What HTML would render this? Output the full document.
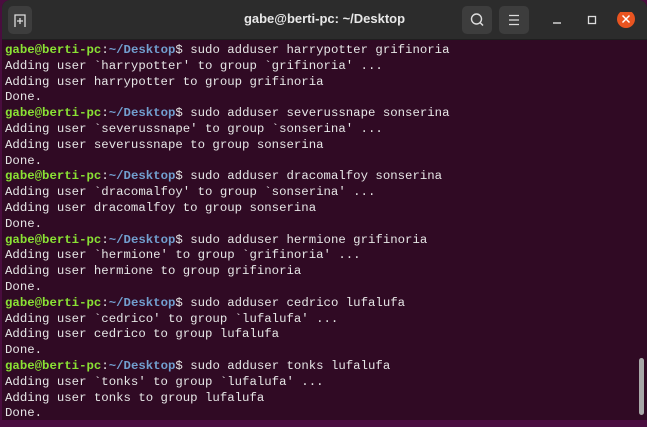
<!DOCTYPE html>
<html><head><style>
body{margin:0;width:647px;height:427px;background:#4a0d3f;overflow:hidden;font-family:"Liberation Sans",sans-serif}
.win{position:absolute;left:2px;top:0;width:645px;height:420px;background:#300a24;border-radius:8px 8px 0 0;overflow:hidden}
.hdr{position:absolute;left:0;top:0;width:645px;height:39px;background:#2c2c2c;border-bottom:1px solid #1f1f1f}
.btn{position:absolute;top:6px;height:28px;background:#3d3d3d;border-radius:5px}
.title{position:absolute;left:0;width:645px;top:11px;text-align:center;color:#e8e8e8;font-size:13px;font-weight:bold}
pre{position:absolute;left:3px;top:43px;margin:0;font-family:"Liberation Mono",monospace;font-size:12.35px;line-height:15.8px;color:#e6e6e6}
.g{color:#8ae234;font-weight:bold}.b{color:#729fcf;font-weight:bold}
.sb{position:absolute;left:637px;top:358px;width:5px;height:57px;background:#a8a8a8;border-radius:3px}
</style></head><body>
<div class="win">
<div class="hdr">
<div class="btn" style="left:6px;width:24px"><svg width="24" height="28"><path d="M7 21V9h10v12M12 12v6M9 15h6" stroke="#ddd" stroke-width="1.3" fill="none"/></svg></div>
<div class="title">gabe@berti-pc: ~/Desktop</div>
<div class="btn" style="left:460px;width:30px"><svg width="30" height="28"><circle cx="14.5" cy="13" r="5" stroke="#ddd" stroke-width="1.4" fill="none"/><path d="M18 16.5l3 3" stroke="#ddd" stroke-width="1.5"/></svg></div>
<div class="btn" style="left:497px;width:30px"><svg width="30" height="28"><path d="M10 9.5h10M10 14h10M10 18.5h10" stroke="#ddd" stroke-width="1.2"/></svg></div>
<svg style="position:absolute;left:548px;top:12px" width="90" height="18"><path d="M3 11h8" stroke="#ddd" stroke-width="1.4"/><rect x="38.5" y="4.5" width="7" height="7" stroke="#ddd" stroke-width="1.3" fill="none"/><circle cx="76" cy="7" r="9" fill="#e95420"/><path d="M72.5 3.5l7 7M79.5 3.5l-7 7" stroke="#fff" stroke-width="1.5"/></svg>
</div>
<pre><span class="g">gabe@berti-pc</span>:<span class="b">~/Desktop</span>$ sudo adduser harrypotter grifinoria
Adding user `harrypotter' to group `grifinoria' ...
Adding user harrypotter to group grifinoria
Done.
<span class="g">gabe@berti-pc</span>:<span class="b">~/Desktop</span>$ sudo adduser severussnape sonserina
Adding user `severussnape' to group `sonserina' ...
Adding user severussnape to group sonserina
Done.
<span class="g">gabe@berti-pc</span>:<span class="b">~/Desktop</span>$ sudo adduser dracomalfoy sonserina
Adding user `dracomalfoy' to group `sonserina' ...
Adding user dracomalfoy to group sonserina
Done.
<span class="g">gabe@berti-pc</span>:<span class="b">~/Desktop</span>$ sudo adduser hermione grifinoria
Adding user `hermione' to group `grifinoria' ...
Adding user hermione to group grifinoria
Done.
<span class="g">gabe@berti-pc</span>:<span class="b">~/Desktop</span>$ sudo adduser cedrico lufalufa
Adding user `cedrico' to group `lufalufa' ...
Adding user cedrico to group lufalufa
Done.
<span class="g">gabe@berti-pc</span>:<span class="b">~/Desktop</span>$ sudo adduser tonks lufalufa
Adding user `tonks' to group `lufalufa' ...
Adding user tonks to group lufalufa
Done.</pre>
<div class="sb"></div>
</div>
</body></html>
